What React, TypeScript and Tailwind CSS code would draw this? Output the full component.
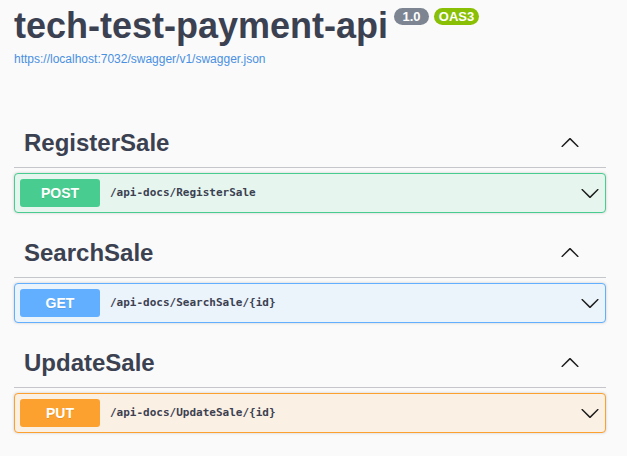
import React from 'react';

type Op = {
  tag: string;
  method: string;
  path: string;
  badge: string;
  border: string;
  bg: string;
};

const ops: Op[] = [
  {
    tag: 'RegisterSale',
    method: 'POST',
    path: '/api-docs/RegisterSale',
    badge: 'bg-[#49cc90]',
    border: 'border-[#49cc90]',
    bg: 'bg-[#e6f6ef]',
  },
  {
    tag: 'SearchSale',
    method: 'GET',
    path: '/api-docs/SearchSale/{id}',
    badge: 'bg-[#61affe]',
    border: 'border-[#61affe]',
    bg: 'bg-[#ebf3fb]',
  },
  {
    tag: 'UpdateSale',
    method: 'PUT',
    path: '/api-docs/UpdateSale/{id}',
    badge: 'bg-[#fca130]',
    border: 'border-[#fca130]',
    bg: 'bg-[#fbf0e4]',
  },
];

const ArrowUp = () => (
  <svg width="20" height="20" viewBox="0 0 20 20" className="fill-[#1d1d1d]">
    <path d="M2.582 13.891c-.272.268-.709.268-.979 0s-.271-.701 0-.969l7.908-7.83c.27-.268.707-.268.979 0l7.908 7.83c.27.268.27.701 0 .969-.271.268-.709.268-.979 0L10 6.75l-7.418 7.141z" />
  </svg>
);

const ArrowDown = () => (
  <svg width="20" height="20" viewBox="0 0 20 20" className="fill-[#1d1d1d]">
    <path d="M17.418 6.109c.272-.268.709-.268.979 0s.271.701 0 .969l-7.908 7.83c-.27.268-.707.268-.979 0l-7.908-7.83c-.27-.268-.27-.701 0-.969.271-.268.709-.268.979 0L10 13.25l7.418-7.141z" />
  </svg>
);

export default function App() {
  return (
    <div
      className="min-h-[456px] bg-[#fafafa] text-[#3b4151]"
      style={{ fontFamily: '"Liberation Sans", Arial, sans-serif' }}
    >
      <div className="ml-[14px] w-[592px] pt-[4px]">
        {/* Info */}
        <div className="flex items-start">
          <h2 className="text-[36px] leading-[43px] font-bold text-[#3b4151]">tech-test-payment-api</h2>
          <span className="ml-[6px] mt-[4px] flex h-[17px] w-[35px] items-center justify-center rounded-full bg-[#7d8492] text-[13px] font-bold leading-none text-white">
            1.0
          </span>
          <span className="ml-[5px] mt-[4px] flex h-[17px] w-[45px] items-center justify-center rounded-full bg-[#89bf04] text-[13px] font-bold leading-none text-white">
            OAS3
          </span>
        </div>
        <a className="mt-[4px] block text-[12px] leading-[16px] text-[#4990e2]">
          https://localhost:7032/swagger/v1/swagger.json
        </a>

        {/* Tags */}
        <div className="mt-[51px] flex flex-col gap-[15px]">
          {ops.map((op) => (
            <div key={op.tag}>
              <div className="flex items-center justify-between border-b border-[#c4c6cb] py-[10px] pl-[10px] pr-[26px]">
                <h3 className="text-[24px] leading-[29px] font-bold">{op.tag}</h3>
                <ArrowUp />
              </div>
              <div
                className={`mt-[5px] flex h-[40px] items-center rounded-[4px] border ${op.border} ${op.bg} pl-[5px] pr-[5px] shadow-[0_0_3px_rgba(0,0,0,0.19)]`}
              >
                <span
                  className={`flex h-[28px] w-[80px] items-center justify-center rounded-[3px] ${op.badge} text-[14px] font-bold text-white [text-shadow:0_1px_0_rgba(0,0,0,0.1)]`}
                >
                  {op.method}
                </span>
                <span
                  className="ml-[10px] flex-1 pt-[1px] text-[11px] font-semibold text-[#3b4151]"
                  style={{ fontFamily: '"DejaVu Sans Mono", "Liberation Mono", monospace' }}
                >
                  {op.path}
                </span>
                <ArrowDown />
              </div>
            </div>
          ))}
        </div>
      </div>
    </div>
  );
}
